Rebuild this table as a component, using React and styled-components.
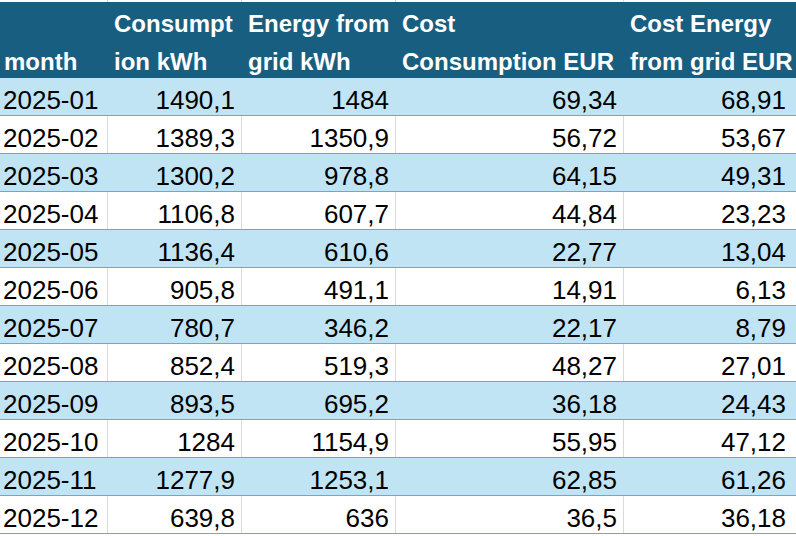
import React from 'react';
import styled, { createGlobalStyle } from 'styled-components';

const rows = [
  ['2025-01', '1490,1', '1484', '69,34', '68,91'],
  ['2025-02', '1389,3', '1350,9', '56,72', '53,67'],
  ['2025-03', '1300,2', '978,8', '64,15', '49,31'],
  ['2025-04', '1106,8', '607,7', '44,84', '23,23'],
  ['2025-05', '1136,4', '610,6', '22,77', '13,04'],
  ['2025-06', '905,8', '491,1', '14,91', '6,13'],
  ['2025-07', '780,7', '346,2', '22,17', '8,79'],
  ['2025-08', '852,4', '519,3', '48,27', '27,01'],
  ['2025-09', '893,5', '695,2', '36,18', '24,43'],
  ['2025-10', '1284', '1154,9', '55,95', '47,12'],
  ['2025-11', '1277,9', '1253,1', '62,85', '61,26'],
  ['2025-12', '639,8', '636', '36,5', '36,18'],
];

const headers = [
  ['month'],
  ['Consumpt', 'ion kWh'],
  ['Energy from', 'grid kWh'],
  ['Cost', 'Consumption EUR'],
  ['Cost Energy', 'from grid EUR'],
];

const GlobalStyle = createGlobalStyle`
  * {
    box-sizing: border-box;
  }
  body {
    margin: 0;
    background: #fff;
    overflow: hidden;
  }
`;

const Sheet = styled.div`
  width: 796px;
  height: 536px;
  overflow: hidden;
  font-family: 'Liberation Sans', Arial, sans-serif;
  background: #fff;
`;

const Row = styled.div`
  display: grid;
  grid-template-columns: 108px 134px 154px 228px 1fr;
  height: ${(p) => p.$height}px;
  background: ${(p) => p.$bg};
  border-bottom: ${(p) => (p.$line ? '1px solid #4fb3e3' : 'none')};
`;

const Cell = styled.div`
  border-right: 1px solid ${(p) => p.$grid};
  padding: 7px 6px 0 6px;
  font-size: 26px;
  line-height: 30px;
  color: #000;
  text-align: ${(p) => (p.$left ? 'left' : 'right')};
  white-space: nowrap;
  &:first-child {
    padding-left: 3px;
  }
  &:last-child {
    border-right: none;
    padding-right: 10px;
  }
`;

const Gap = styled.div`
  border-right: 1px solid #d9d9d9;
  &:last-child {
    border-right: none;
  }
`;

const HeadCell = styled.div`
  display: flex;
  align-items: flex-end;
  padding: 0 6px;
  color: #fff;
  font-weight: bold;
  font-size: 24px;
  white-space: nowrap;
  &:first-child {
    padding-left: 4px;
  }
`;

const Label = styled.div`
  line-height: 38px;
  margin-bottom: -3px;
`;

export default function App() {
  return (
    <>
      <GlobalStyle />
      <Sheet>
        <Row $height={2} $bg="#fff">
          {headers.map((_, i) => (
            <Gap key={i} />
          ))}
        </Row>
        <Row $height={76} $bg="#185e80">
          {headers.map((lines, i) => (
            <HeadCell key={i}>
              <Label>
                {lines.map((l, j) => (
                  <div key={j}>{l}</div>
                ))}
              </Label>
            </HeadCell>
          ))}
        </Row>
        {rows.map((r, i) => {
          const band = i % 2 === 0;
          return (
            <Row key={r[0]} $height={38} $bg={band ? '#c1e4f5' : '#fff'} $line>
              {r.map((v, j) => (
                <Cell key={j} $left={j === 0} $grid={band ? '#c1e4f5' : '#d9d9d9'}>
                  {v}
                </Cell>
              ))}
            </Row>
          );
        })}
      </Sheet>
    </>
  );
}
